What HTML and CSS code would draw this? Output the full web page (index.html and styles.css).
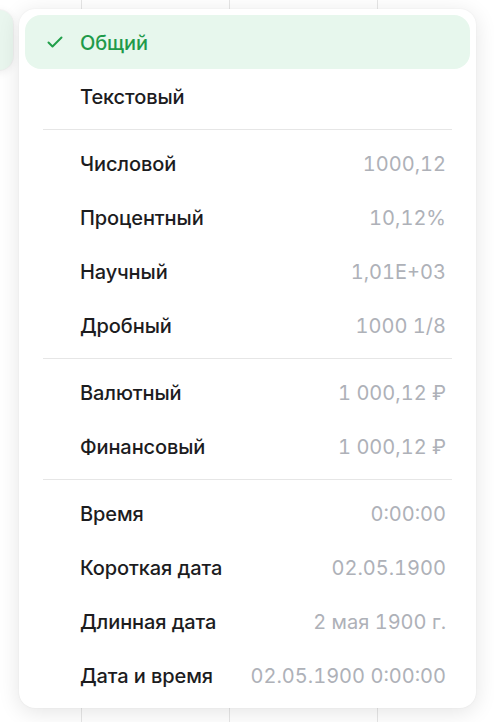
FILE: index.html
```html
<!DOCTYPE html>
<html lang="ru">
<head>
<meta charset="utf-8">
<link rel="stylesheet" href="styles.css">
</head>
<body>
<div class="sheet">
  <div class="trigger"></div>
  <div class="menu">
    <div class="item selected">
      <span class="label"><svg class="check" width="16" height="16" viewBox="0 0 16 16"><path d="M1.5 8.5 L5.5 12.5 L14.5 3.5" fill="none" stroke="currentColor" stroke-width="2" stroke-linecap="round" stroke-linejoin="round"/></svg>Общий</span>
    </div>
    <div class="item"><span class="label">Текстовый</span></div>
    <div class="sep"></div>
    <div class="item"><span class="label">Числовой</span><span class="value">1000,12</span></div>
    <div class="item"><span class="label">Процентный</span><span class="value">10,12%</span></div>
    <div class="item"><span class="label">Научный</span><span class="value">1,01E+03</span></div>
    <div class="item"><span class="label">Дробный</span><span class="value">1000 1/8</span></div>
    <div class="sep"></div>
    <div class="item"><span class="label">Валютный</span><span class="value">1 000,12 ₽</span></div>
    <div class="item"><span class="label">Финансовый</span><span class="value">1 000,12 ₽</span></div>
    <div class="sep"></div>
    <div class="item"><span class="label">Время</span><span class="value">0:00:00</span></div>
    <div class="item"><span class="label">Короткая дата</span><span class="value">02.05.1900</span></div>
    <div class="item"><span class="label">Длинная дата</span><span class="value">2 мая 1900 г.</span></div>
    <div class="item"><span class="label">Дата и время</span><span class="value">02.05.1900 0:00:00</span></div>
  </div>
</div>
</body>
</html>
```
FILE: styles.css
```css
html, body {
  margin: 0;
  padding: 0;
}
body {
  width: 494px;
  height: 722px;
  overflow: hidden;
  background: #ffffff;
  font-family: Inter, "Noto Sans", sans-serif;
}
.sheet {
  position: relative;
  width: 494px;
  height: 722px;
  background-color: #ffffff;
  background-image:
    repeating-linear-gradient(to bottom, transparent 0, transparent 47.5px, #e4e4e4 47.5px, #e4e4e4 48.8px, transparent 48.8px, transparent 76.07px),
    linear-gradient(to right, transparent 81px, #e6e6e6 81px, #e6e6e6 82px, transparent 82px, transparent 229.5px, #e6e6e6 229.5px, #e6e6e6 230.5px, transparent 230.5px, transparent 377.5px, #e6e6e6 377.5px, #e6e6e6 378.5px, transparent 378.5px);
  background-size: 100% 28.57px, 100% 100%;
  background-position: 0 19.9px, 0 0;
  background-repeat: repeat-y, no-repeat;
}
.trigger {
  position: absolute;
  left: -60px;
  top: 10px;
  width: 73px;
  height: 60px;
  border-radius: 14px;
  background: #e9f6ee;
  box-shadow: 0 2px 10px rgba(0, 0, 0, 0.08), 0 0 0 1px rgba(0,0,0,0.03);
}
.menu {
  position: absolute;
  left: 19px;
  top: 9px;
  width: 457px;
  box-sizing: border-box;
  padding: 6px;
  background: #ffffff;
  border-radius: 16px;
  box-shadow: 0 4px 22px rgba(0, 0, 0, 0.11), 0 0 2px rgba(0, 0, 0, 0.06);
  display: flex;
  flex-direction: column;
}
.item {
  height: 54px;
  box-sizing: border-box;
  padding: 1px 24px 0 55px;
  display: flex;
  align-items: center;
  justify-content: space-between;
  border-radius: 16px;
  font-size: 20px;
  font-weight: 500;
  color: #1c1c1e;
  letter-spacing: -0.1px;
}
.label {
  position: relative;
}
.value {
  color: #aeb1b8;
  font-weight: 400;
  font-variant-numeric: tabular-nums;
  letter-spacing: 0;
}
.selected {
  background: #e7f7ed;
  color: #1f9a4a;
}
.check {
  position: absolute;
  left: -33px;
  top: 50%;
  margin-top: -9px;
  color: #21a04a;
}
.sep {
  height: 1px;
  margin: 6px 18px;
  background: #e6e6e6;
}
```
